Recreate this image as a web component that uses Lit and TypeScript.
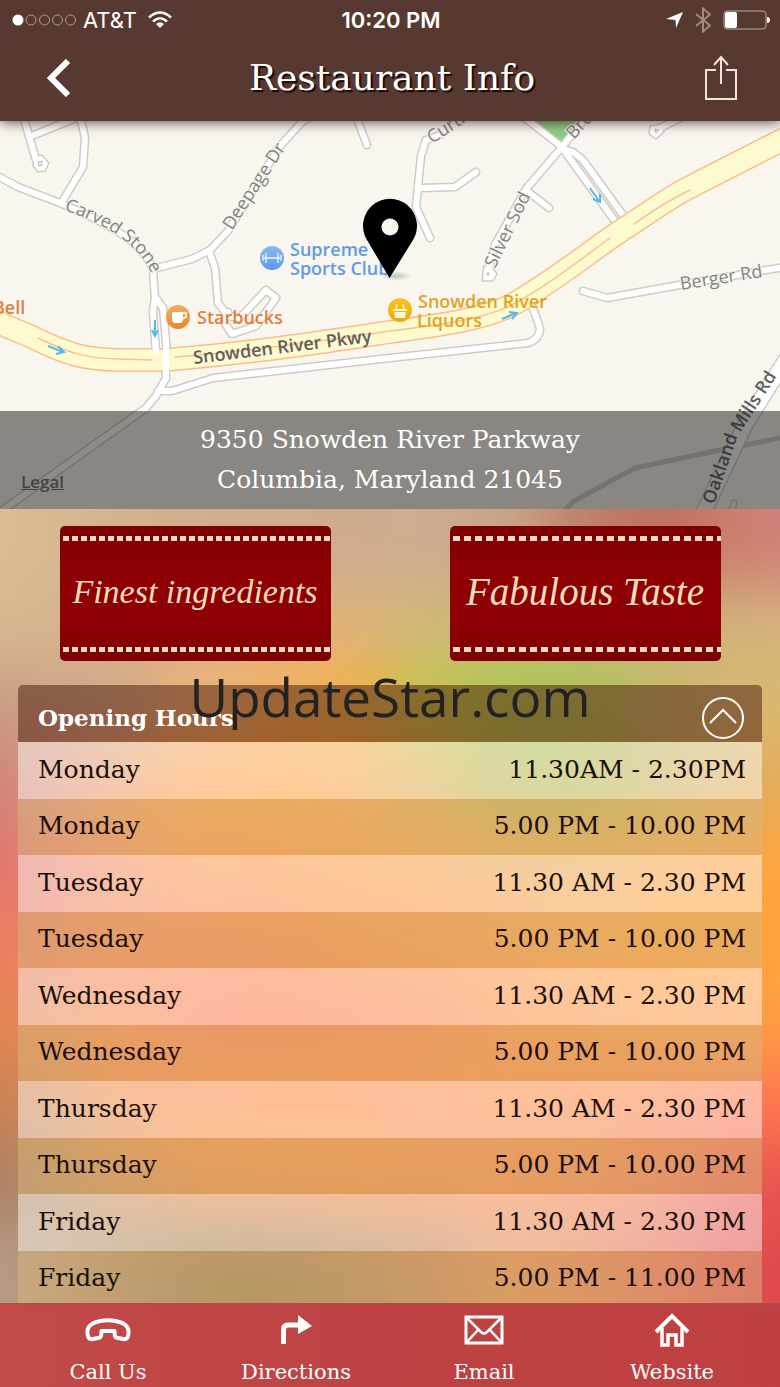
import { LitElement, html, svg, css } from "lit";
import { customElement, state } from "lit/decorators.js";

const SLAB = css`"American Typewriter", "DejaVu Serif", serif`;

/* Colour samples of the soft backdrop: one row per band, left to right. */
const BACKDROP = [
  "dcbf98 d8ba92 d4b48c d2ae8c d0ab8c cfab8e ccac90 c9a488 be8068 c07060 cc8070 d08080",
  "d8b890 d6b68e d4ae8c d8b088 dcb080 e0b478 d2b878 c4bc70 c0bc6c ccb478 d4b47c d8b47c",
  "c8957e cca088 d4a888 f0b478 fcb25c f4b044 c0c848 a8c84c acc458 c4b868 d8b870 dcb870",
  "c87a74 d89080 f09a60 ff9c40 ff9e3c f8a444 dcac4c b8b44c b4b44c ccb25c e0b060 e8a850",
  "e0706a e67c70 f48a5c fc9444 fc9440 fc9840 f89c40 f0a048 f0a448 f8a444 ffa040 ffa840",
  "f07c64 ec8060 f68450 fc8450 fc8448 fc8c40 fc9040 fc9840 fca040 ffa038 ffa038 ffac40",
  "e08058 e68850 f88448 fc7c50 ff7848 fc7c48 fc8040 fc8c40 fc9040 ff9440 ff9844 ffa044",
  "c07e60 d08850 f0883c fc883c ff883c ff883c ff8844 ff883c fc843c fc8044 ff7850 ff7450",
  "ac7a70 b08860 d08a50 e88840 f08840 f4883c f48440 f48448 f08048 ec7450 e85c50 e44c50",
  "b89c94 b49878 a88860 987c50 98784c a87c50 bc7c50 dc8444 e07848 e46450 e04c50 e04848",
].map((row) => row.split(" "));

const HOURS: [string, string][] = [
  ["Monday", "11.30AM - 2.30PM"],
  ["Monday", "5.00 PM - 10.00 PM"],
  ["Tuesday", "11.30 AM - 2.30 PM"],
  ["Tuesday", "5.00 PM - 10.00 PM"],
  ["Wednesday", "11.30 AM - 2.30 PM"],
  ["Wednesday", "5.00 PM - 10.00 PM"],
  ["Thursday", "11.30 AM - 2.30 PM"],
  ["Thursday", "5.00 PM - 10.00 PM"],
  ["Friday", "11.30 AM - 2.30 PM"],
  ["Friday", "5.00 PM - 11.00 PM"],
];

const STREETS = [
  "M22 112 L36 160",
  "M29 137 L76 118",
  "M79 112 L85 138 L83 167 L62 202",
  "M-6 174 L18 187 L60 203 C100 220 140 238 153 269",
  "M153 269 L192 259 L210 250 L228 231 L280 146 L303 121 L320 112",
  "M153 269 L155 300",
  "M155 298 L153 312 L156 352",
  "M156 298 L163 308 L167 352",
  "M165 368 L166 378 L156 396 L146 408 L0 512",
  "M158 391 L172 391 L213 378 L390 358 L528 343 Q540 339 540 328 L532 306",
  "M209 251 L215 268 L218 303 L228 316 L240 318 L266 290 L276 298 L256 326 L232 334 L224 322 L228 312",
  "M356 116 L367 145",
  "M440 135 L426 140 L421 156 L416 207 L430 238",
  "M420 188 L455 187 L476 172",
  "M520 114 L562 147 L526 189 L495 245 L488 272",
  "M527 191 L549 208",
  "M562 147 L600 100",
  "M563 149 L617 224",
  "M563 149 L573 152 L583 160 L625 218",
  "M583 291 L607 298 L685 284 L790 266",
  "M656 130 L684 116",
];

const HIGHWAY =
  "M-6 321 L30 336 C70 356 85 359 118 360 L165 360 C260 352 330 341 390 332 C440 325 480 320 510 306 C550 284 585 255 622 230 C650 212 670 197 690 187 L790 136";
const MEDIAN =
  "M38 338 C75 356 90 358 118 359 L152 360 M175 357 C260 350 330 340 390 331 C440 325 480 320 510 306 C550 284 580 260 610 238 M634 224 C660 206 670 200 690 190";

@customElement("soft-backdrop")
class SoftBackdrop extends LitElement {
  static styles = css`
    :host { display: block; }
    svg { display: block; width: 100%; height: 100%; }
  `;
  render() {
    const last = BACKDROP.length - 1;
    const bands = [BACKDROP[0], ...BACKDROP, BACKDROP[last]];
    return html`<svg viewBox="0 0 780 800" preserveAspectRatio="none" aria-hidden="true">
      <filter id="soft" x="-20%" y="-20%" width="140%" height="140%" color-interpolation-filters="sRGB">
        <feGaussianBlur stdDeviation="30"></feGaussianBlur>
      </filter>
      <g filter="url(#soft)">
        ${bands.map((band, r) =>
          band.map(
            (c, i) => svg`<rect
              x=${i === 0 ? -200 : (i - 1) * 78}
              y=${r === 0 ? -200 : (r - 1) * 80}
              width=${i === 0 ? 201 : i === 11 ? 200 : 79}
              height=${r === 0 ? 201 : r === 11 ? 200 : 81}
              fill=${"#" + c}></rect>`
          )
        )}
      </g>
    </svg>`;
  }
}

@customElement("street-map")
class StreetMap extends LitElement {
  static styles = css`
    :host { display: block; background: #f9f6f0; }
    svg { display: block; width: 100%; height: 100%; }
    .road { fill: none; stroke-linejoin: round; stroke-linecap: round; }
    .casing { stroke: #cfccc8; stroke-width: 9; }
    .street { stroke: #fff; stroke-width: 6; }
    .label { font-family: "Open Sans", sans-serif; font-size: 18px; font-weight: 500; fill: #828282; }
    .major { fill: #5e5e60; font-weight: 600; }
    .halo { paint-order: stroke; stroke: #f9f6f0; stroke-width: 2px; }
    .blue { fill: #5f9ae6; }
    .orange { fill: #e08043; }
    .gold { fill: #e3a21c; }
    .poi { font-weight: 600; }
    .arrow { fill: none; stroke: #56b8ee; stroke-width: 2; }
  `;
  render() {
    return html`<svg viewBox="0 121 780 388" preserveAspectRatio="xMidYMid slice" role="img" aria-label="Map">
      <defs>
        <linearGradient id="b" x1="0" x2="0" y1="0" y2="1"><stop offset="0" stop-color="#8bb6f0"/><stop offset="1" stop-color="#5a9bee"/></linearGradient>
        <linearGradient id="o" x1="0" x2="0" y1="0" y2="1"><stop offset="0" stop-color="#f6ac60"/><stop offset="1" stop-color="#e58a30"/></linearGradient>
        <linearGradient id="g" x1="0" x2="0" y1="0" y2="1"><stop offset="0" stop-color="#fcc21c"/><stop offset="1" stop-color="#eda806"/></linearGradient>
        <radialGradient id="s"><stop offset="0" stop-color="#000" stop-opacity=".22"/><stop offset="1" stop-color="#000" stop-opacity="0"/></radialGradient>
        <path id="carved" d="M64 210 C100 223 132 237 151 272"/>
      </defs>
      <path d="M530 118 L562 142 L580 118Z" fill="#8fcc85"/>
      <path class="road" d="M560 515 L574 501 L635 468 L720 450 L790 436" stroke="#cfccc8" stroke-width="5"/>
      ${STREETS.map((d) => svg`<path class="road casing" d=${d}></path>`)}
      <path d="M33 157 L42 155 L49 163 L45 171 L38 172 L33 166Z M484 266 L491 265 L497 274 L493 281 L482 281Z M650 126 L660 124 L664 132 L656 139 L649 134Z" fill="#fff" stroke="#cfccc8" stroke-width="1.5"/>
      ${STREETS.map((d) => svg`<path class="road street" d=${d}></path>`)}
      <path d="M38 162 l4 -1 v4 l-3 1z M487 273 h2 v2 h-2z M655 129 l4 1 -3 3z" fill="#eee" stroke="#bbb"/>
      <path class="road" d="M700 520 L745 425 L795 345" stroke="#cfccc8" stroke-width="17"/>
      <path class="road" d="M700 520 L745 425 L795 345" stroke="#fff" stroke-width="14"/>
      <path d="M728 512 L732 500 L737 501 L735 512" fill="none" stroke="#c4c0bc"/>
      <path class="road" d=${HIGHWAY} stroke="#f9bd85" stroke-width="24"/>
      <path class="road" d=${HIGHWAY} stroke="#fefad0" stroke-width="21"/>
      <path class="road" d=${MEDIAN} stroke="#f8c391" stroke-width="1.5"/>
      <path class="road street" d="M155 340 L156 350 M166 340 L166 378"/>
      <g class="arrow">
        <path d="M155 320 v15 M152 330 l3 6 3 -6"/>
        <path d="M48 346 l15 6 M58 346 l6 6 -8 2"/>
        <path d="M502 319 l14 -6 M509 312 l8 1 -5 6"/>
        <path d="M590 188 l9 13 M600 194 l0 8 -7 -3"/>
      </g>
      <text class="label halo"><textPath href="#carved">Carved Stone</textPath></text>
      <text class="label halo" transform="translate(232 231) rotate(-57)">Deepage Dr</text>
      <text class="label halo" transform="translate(432 144) rotate(-33)">Curtis Dr</text>
      <text class="label halo" transform="translate(574 140) rotate(-48)">Bruce</text>
      <text class="label halo" transform="translate(495 269) rotate(-64)">Silver Sod</text>
      <text class="label halo" transform="translate(681 290) rotate(-9)">Berger Rd</text>
      <text class="label major" transform="translate(194 364) rotate(-7)">Snowden River Pkwy</text>
      <text class="label major" transform="translate(714 505) rotate(-71)">Oakland</text>
      <text class="label major" transform="translate(740 433) rotate(-57)">Mills Rd</text>
      <text class="label poi blue" x="290" y="256">Supreme</text>
      <text class="label poi blue" x="290" y="275">Sports Club</text>
      <text class="label poi orange" x="-7" y="314">Bell</text>
      <text class="label poi orange" x="197" y="324">Starbucks</text>
      <text class="label poi gold" x="418" y="308">Snowden River</text>
      <text class="label poi gold" x="417" y="327">Liquors</text>
      <circle cx="272" cy="258" r="12" fill="url(#b)"/>
      <path d="M264 258 h16 M266 253 v10 M278 253 v10 M263 255 v6 M281 255 v6" stroke="#e8f1fd" stroke-width="1.5"/>
      <circle cx="178" cy="317" r="12" fill="url(#o)"/>
      <path d="M172 312 h11 v5 q0 6 -3 6 h-5 q-3 0 -3 -6z" fill="#fff"/>
      <path d="M183 313 h3 v4 l-4 2" fill="none" stroke="#fff" stroke-width="1.5"/>
      <circle cx="400" cy="310" r="12" fill="url(#g)"/>
      <path d="M394 312 h12 l-1 6 h-10z M393 309 h14 v2 h-14z" fill="#fff7d8"/>
      <path d="M396 309 l1 -5 M404 309 l-1 -5" stroke="#fff7d8" stroke-width="1.5"/>
      <ellipse cx="396" cy="276" rx="16" ry="5" fill="url(#s)"/>
      <path fill-rule="evenodd" d="M389.500 278 L367 240 A27 27 0 1 1 413 240Z M390 218.500 a8.500 8.500 0 1 0 .01 0Z"/>
    </svg>`;
  }
}

@customElement("app-root")
class AppRoot extends LitElement {
  @state() private open = true;

  static styles = css`
    :host {
      display: flex;
      flex-direction: column;
      position: relative;
      height: 100vh;
      overflow: hidden;
      font-family: ${SLAB};
      color: #1a0f08;
    }
    * { box-sizing: border-box; }
    button { border: 0; padding: 0; background: none; color: inherit; font: inherit; cursor: pointer; }
    svg { display: block; }
    .top {
      position: relative;
      z-index: 1;
      flex: none;
      background: #573931;
      color: #fff;
      box-shadow: 0 1px 12px rgba(50, 20, 10, 0.8);
    }
    .status {
      display: grid;
      grid-template-columns: 1fr auto 1fr;
      align-items: center;
      height: 40px;
      padding: 0 10px 0 12px;
      font: 400 22px/40px Inter, sans-serif;
    }
    .carrier, .indicators { display: flex; align-items: center; gap: 5px; }
    .carrier .wifi { margin-left: 6px; }
    .indicators { justify-content: flex-end; gap: 12px; }
    .clock { font-weight: 600; }
    .bar {
      display: grid;
      grid-template-columns: 1fr auto 1fr;
      align-items: center;
      height: 81px;
      padding: 0 42px 6px 46px;
    }
    .bar h1 { margin: 0; font-size: 36px; line-height: 40px; font-weight: 400; text-shadow: 2px 2px 1px #150a06; }
    .share { justify-self: end; }
    .place { position: relative; flex: none; height: 388px; }
    .place street-map { height: 100%; }
    .address {
      position: absolute;
      inset: auto 0 0 0;
      height: 98px;
      padding-top: 9px;
      background: rgba(28, 24, 22, 0.5);
      color: #fff;
      text-align: center;
      font-size: 25px;
      line-height: 40px;
      font-style: normal;
    }
    .legal {
      position: absolute;
      left: 21px;
      bottom: 15px;
      font: 600 17px/24px "Open Sans", sans-serif;
      color: #46413f;
    }
    .content { position: relative; flex: 1; min-height: 0; overflow: hidden; }
    .backdrop { position: absolute; inset: 0; }
    .sheet { position: relative; }
    .badges { display: grid; grid-template-columns: 1fr 1fr; justify-items: center; padding: 17px 0 24px; }
    .badge {
      display: grid;
      grid-template-rows: 24px 1fr 24px;
      width: 271px;
      height: 135px;
      border-radius: 5px;
      overflow: hidden;
      background: linear-gradient(#7c0005, #8d0004 30%, #8d0004 70%, #7c0005);
      color: #fbdcb8;
      text-align: center;
      font: italic 39px/84px "Gabriola", "Liberation Serif", serif;
    }
    .badge .small { font-size: 34px; }
    .stitch { height: 5px; margin: 10px 0 9px 3px; background: repeating-linear-gradient(90deg, #fbdcb8 0 6px, transparent 6px 9px); }
    .wide .stitch { background: repeating-linear-gradient(90deg, #fbdcb8 0 7px, transparent 7px 11px); }
    .hours { margin: 0 18px; border-radius: 5px 5px 0 0; overflow: hidden; }
    .hours h2 { margin: 0; font-size: 23px; line-height: 32px; }
    .toggle {
      display: flex;
      align-items: center;
      justify-content: space-between;
      width: 100%;
      height: 57px;
      padding: 8px 17px 0 20px;
      background: rgba(76, 30, 16, 0.52);
      color: #fff;
    }
    .closed svg { transform: rotate(180deg); }
    table { width: 100%; border-collapse: collapse; font-size: 25px; line-height: 32px; }
    tr { height: 57px; background: rgba(255, 255, 255, 0.47); }
    tr:nth-child(even) { height: 56px; background: rgba(216, 182, 128, 0.5); }
    th, td { padding: 0 16px 2px 20px; font-weight: 400; text-align: left; }
    td { text-align: right; }
    .tabs {
      position: relative;
      flex: none;
      display: grid;
      grid-template-columns: repeat(4, 1fr);
      height: 84px;
      padding: 0 14px;
      border-top: 2px solid #b34a44;
      background: linear-gradient(90deg, #c24a49, #be4243 50%, #bf4040);
    }
    .tabs a {
      display: flex;
      flex-direction: column;
      align-items: center;
      gap: 7px;
      padding-top: 6px;
      color: #fff;
      text-decoration: none;
      font-size: 21px;
      line-height: 28px;
    }
    .tabs svg { fill: none; stroke: #fff; stroke-width: 4; }
    .mark {
      position: absolute;
      top: 661px;
      left: 0;
      right: 0;
      text-align: center;
      pointer-events: none;
      font: 400 53px/72px "Open Sans", sans-serif;
      color: #222;
    }
  `;

  render() {
    return html`
      <header class="top">
        <div class="status">
          <div class="carrier">
            <svg width="66" height="14" viewBox="0 0 66 14" fill="none" stroke="#b09c94" stroke-width="1">
              <circle cx="6" cy="7" r="5.500" fill="#fff" stroke="none"/>
              <circle cx="19" cy="7" r="5"/><circle cx="32.500" cy="7" r="5"/><circle cx="45.500" cy="7" r="5"/><circle cx="58.500" cy="7" r="5"/>
            </svg>
            <span>AT&amp;T</span>
            <svg class="wifi" width="24" height="18" viewBox="0 0 24 18" fill="none" stroke="#fff" stroke-width="2.600">
              <path d="M1 6.500 Q12 -3.500 23 6.500"/><path d="M5 10.500 Q12 4 19 10.500"/><path d="M12 17 L8 13 Q12 9.500 16 13Z" fill="#fff" stroke="none"/>
            </svg>
          </div>
          <div class="clock">10:20 PM</div>
          <div class="indicators">
            <svg width="17" height="17" viewBox="0 0 17 17"><path d="M17 0 L10 16 L9.500 8 L0 7Z" fill="#fff"/></svg>
            <svg width="16" height="26" viewBox="0 0 16 26" fill="none" stroke="#a08a82" stroke-width="2"><path d="M1 7 L15 18.500 L8 24.500 V1.500 L15 7.500 L1 19"/></svg>
            <svg width="47" height="20" viewBox="0 0 47 20"><rect x="1" y="1" width="42" height="18" rx="3.500" fill="none" stroke="#9c867e" stroke-width="1.500"/><rect x="2" y="2" width="12" height="16" rx="2" fill="#fff"/><path d="M44 7 q3 0 3 3 t-3 3z" fill="#fff"/></svg>
          </div>
        </div>
        <div class="bar">
          <button aria-label="Back">
            <svg width="26" height="38" viewBox="0 0 26 38" fill="none" stroke="#fff" stroke-width="6"><path d="M22 2 L5 19 L22 36"/></svg>
          </button>
          <h1>Restaurant Info</h1>
          <button class="share" aria-label="Share">
            <svg width="34" height="46" viewBox="0 0 34 46" fill="none" stroke="#f2e4dd" stroke-width="2"><path d="M12 15 H2 V44 H32 V15 H22 M17 29 V3 M10 10 L17 2 L24 10"/></svg>
          </button>
        </div>
      </header>

      <section class="place">
        <street-map></street-map>
        <address class="address">9350 Snowden River Parkway<br />Columbia, Maryland 21045</address>
        <a class="legal" href="#legal">Legal</a>
      </section>

      <main class="content">
        <soft-backdrop class="backdrop"></soft-backdrop>
        <div class="sheet">
          <div class="badges">
            <div class="badge"><div class="stitch"></div><span class="small">Finest ingredients</span><div class="stitch"></div></div>
            <div class="badge wide"><div class="stitch"></div><span>Fabulous Taste</span><div class="stitch"></div></div>
          </div>
          <section class="hours">
            <button class="toggle ${this.open ? "" : "closed"}" aria-expanded=${this.open} @click=${() => (this.open = !this.open)}>
              <h2>Opening Hours</h2>
              <svg width="44" height="44" viewBox="0 0 44 44" fill="none" stroke="#fff" stroke-width="2"><circle cx="22" cy="22" r="20"/><path d="M9 27 L22 14 L35 27"/></svg>
            </button>
            ${this.open
              ? html`<table><tbody>
                  ${HOURS.map(([day, time]) => html`<tr><th scope="row">${day}</th><td>${time}</td></tr>`)}
                </tbody></table>`
              : ""}
          </section>
        </div>
      </main>

      <nav class="tabs">
        <a href="#call">
          <svg width="46" height="40" viewBox="0 0 46 40" stroke-linejoin="round"><path d="M2.500 20 C3 5.500 43 5.500 43.500 20 C44 26 42 29 38 28 L31 26.500 Q29.500 26 29.500 20 H16.500 Q16.500 26 15 26.500 L8 28 C4 29 2 26 2.500 20Z"/></svg>
          Call Us
        </a>
        <a href="#directions">
          <svg width="32" height="40" viewBox="0 0 32 40"><path d="M3.500 33 V19 Q3.500 14 8 14 H20" stroke-width="5"/><path d="M18 4 L32 15 L18 23Z" fill="#fff" stroke="none"/></svg>
          Directions
        </a>
        <a href="#email">
          <svg width="40" height="40" viewBox="0 0 40 40" stroke-width="3"><path stroke-width="3" d="M2 6 H38 V32 H2Z"/><path stroke-width="2.500" d="M2 6 L17 21 Q20 24 23 21 L38 6 M2 32 L14 19 M38 32 L26 19"/></svg>
          Email
        </a>
        <a href="#website">
          <svg width="36" height="40" viewBox="0 0 36 40"><path d="M2 21 L18 5 L34 21" stroke-width="4"/><path d="M8 17 V34 H14 V24 H22 V34 H28 V17" stroke-width="3.500"/></svg>
          Website
        </a>
      </nav>

      <div class="mark">UpdateStar.com</div>
    `;
  }
}
